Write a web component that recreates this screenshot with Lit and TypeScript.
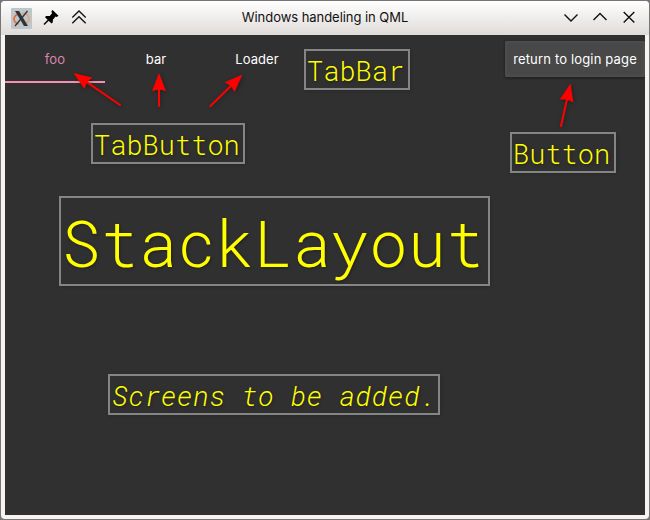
import { LitElement, html, css, svg } from "lit";
import { customElement, property } from "lit/decorators.js";

@customElement("note-label")
class NoteLabel extends LitElement {
  @property() text = "";
  static styles = css`
    :host {
      box-sizing: border-box;
      display: flex;
      align-items: center;
      border: 2px solid #858585;
      color: #ff0;
      font: 300 27px/1 "Roboto Mono", "Liberation Mono", monospace;
      white-space: pre;
      text-shadow: 1px 1px 3px rgba(0, 0, 0, 0.35);
      box-shadow: 1px 1px 3px rgba(0, 0, 0, 0.15);
      padding-left: 1px;
      padding-top: 2px;
    }
  `;
  render() {
    return html`<span>${this.text}</span>`;
  }
}

const ARROWS = [
  { x: 73.5, y: 73, x2: 120, y2: 105 },
  { x: 159, y: 73, x2: 159, y2: 106 },
  { x: 242.5, y: 74.5, x2: 210.5, y2: 106 },
  { x: 570.5, y: 83.5, x2: 561, y2: 126 },
];

function arrow(a: { x: number; y: number; x2: number; y2: number }) {
  const angle = (Math.atan2(a.y2 - a.y, a.x2 - a.x) * 180) / Math.PI;
  const len = Math.hypot(a.x2 - a.x, a.y2 - a.y);
  return svg`<g transform="translate(${a.x} ${a.y}) rotate(${angle})">
    <path d="M14 0H${len}" stroke="#f00" stroke-width="2" stroke-linecap="round"/>
    <path d="M0 0L18 -7L16.5 0L18 7Z" fill="#f00"/>
  </g>`;
}

@customElement("app-root")
class AppRoot extends LitElement {
  static styles = css`
    :host {
      display: block;
      width: 650px;
      height: 520px;
      background: #4a4848;
      font-family: Inter, "Noto Sans", sans-serif;
    }
    .edge {
      box-sizing: border-box;
      height: 520px;
      padding: 1px;
      background: #777575;
    }
    .window {
      box-sizing: border-box;
      height: 518px;
      border-radius: 4px;
      background: #f6f3f1;
      padding: 0 4px 4px;
      position: relative;
      display: flex;
      flex-direction: column;
      overflow: hidden;
    }
    .title {
      height: 34px;
      margin: 0 -4px;
      display: grid;
      grid-template-columns: 1fr auto 1fr;
      align-items: center;
      background: linear-gradient(#fff, #dfdbd8);
      color: #111;
      font-size: 13px;
    }
    .left {
      display: flex;
      align-items: center;
      padding-left: 10px;
      gap: 8px;
    }
    .right {
      display: flex;
      justify-content: flex-end;
      gap: 9px;
      padding-right: 10.5px;
    }
    .caption {
      padding-bottom: 2px;
      letter-spacing: -0.05px;
    }
    svg {
      display: block;
    }
    .content {
      flex: 1;
      background: #303030;
      overflow: hidden;
    }
    .row {
      display: flex;
      justify-content: space-between;
      align-items: flex-start;
    }
    .tabs {
      display: flex;
    }
    .tab {
      box-sizing: border-box;
      width: 101px;
      height: 48px;
      display: flex;
      align-items: center;
      justify-content: center;
      font-size: 13px;
      letter-spacing: 0.1px;
      color: #fff;
      padding-left: 1px;
    }
    .tab.active {
      width: 100px;
      color: #d886aa;
      border-bottom: 2px solid #f48fb1;
      padding: 2px 0 0;
    }
    .button {
      box-sizing: border-box;
      width: 140px;
      height: 36px;
      margin-top: 6px;
      border: 0;
      border-radius: 2px;
      padding: 0;
      background: #484848;
      color: #fff;
      font: 13px Inter, "Noto Sans", sans-serif;
      letter-spacing: 0.16px;
      white-space: nowrap;
      box-shadow: 0 1px 3px #1c1c1c, inset 0 0 5px #555;
    }
    .arrows {
      position: absolute;
      left: -1px;
      top: -1px;
      filter: drop-shadow(1px 1px 2px rgba(0, 0, 0, 0.35));
    }
    note-label {
      position: absolute;
    }
    .n1 { left: 303px; top: 48px; width: 106px; height: 41px; }
    .n2 { left: 90px; top: 122px; width: 154px; height: 41px; }
    .n3 { left: 509px; top: 131px; width: 106px; height: 41px; }
    .n4 { left: 58px; top: 195px; width: 431px; height: 90px; font-size: 64px; }
    .n5 { left: 107px; top: 373px; width: 332px; height: 41px; font-style: italic; padding-left: 2px; letter-spacing: 0.37px; }
  `;

  render() {
    return html`<div class="edge"><div class="window">
      <div class="title">
        <div class="left">
          <svg width="21" height="21" viewBox="0 0 21 21" fill="none">
            <rect width="21" height="21" rx="1" fill="#bdc6cb"/>
            <path d="M11 5.5Q18 5.5 18 10.5Q18 15 12 16" stroke="#e5a274" stroke-width="1.5"/>
            <path d="M7 6Q2.8 8 3 11.5Q3.4 15 7.5 15.8" stroke="#ee6830" stroke-width="1.7"/>
            <path d="M4 3H8L17 18H13Z" fill="#303437"/>
            <path d="M16.5 3L4 18" stroke="#303437" stroke-width="1.3"/>
          </svg>
          <svg width="22" height="22" viewBox="0 0 22 22">
            <path d="M12.5 3L18.5 8.7L16.8 10L15.6 9.5L13 12.5L12.7 15.5L11.5 16.5L5 10.2L6 9L9.8 8.9L12 6.2L11.4 4.3Z" fill="#000"/>
            <path d="M9 12.5L4 17.5" stroke="#000" stroke-width="1.4"/>
          </svg>
          <svg width="18" height="18" viewBox="0 0 18 18" fill="none" stroke="#111" stroke-width="1.3">
            <path d="M2.3 8.5L9 2L15.7 8.5M2.3 14.3L9 7.7L15.7 14.3"/>
          </svg>
        </div>
        <div class="caption">Windows handeling in QML</div>
        <div class="right">
          <svg width="20" height="20" viewBox="0 0 20 20" fill="none" stroke="#111" stroke-width="1.4"><path d="M3.5 6.5L10 13L16.5 6.5"/></svg>
          <svg width="20" height="20" viewBox="0 0 20 20" fill="none" stroke="#111" stroke-width="1.4"><path d="M3.5 12L10 5.5L16.5 12"/></svg>
          <svg width="20" height="20" viewBox="0 0 20 20" fill="none" stroke="#111" stroke-width="1.4"><path d="M4.7 4L15.3 14.6M15.3 4L4.7 14.6"/></svg>
        </div>
      </div>
      <div class="content">
        <div class="row">
          <div class="tabs">
            <div class="tab active">foo</div>
            <div class="tab">bar</div>
            <div class="tab">Loader</div>
          </div>
          <button class="button">return to login page</button>
        </div>
      </div>
      <svg class="arrows" width="650" height="200" viewBox="0 0 650 200">${ARROWS.map(arrow)}</svg>
      <note-label class="n1" text="TabBar"></note-label>
      <note-label class="n2" text="TabButton"></note-label>
      <note-label class="n3" text="Button"></note-label>
      <note-label class="n4" text="StackLayout"></note-label>
      <note-label class="n5" text="Screens to be added."></note-label>
    </div></div>`;
  }
}
